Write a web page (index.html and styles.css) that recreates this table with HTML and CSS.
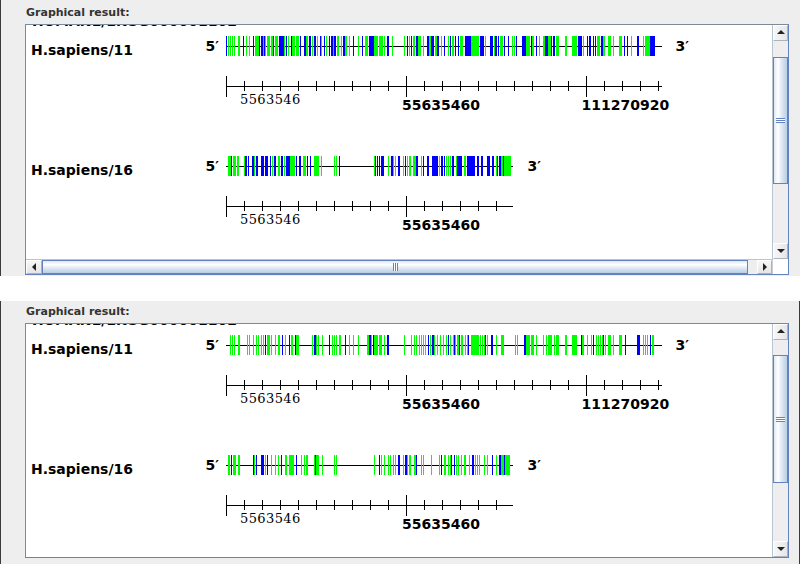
FILE: index.html
```html
<!DOCTYPE html>
<html>
<head>
<meta charset="utf-8">
<title>Graphical result</title>
<link rel="stylesheet" href="styles.css">
</head>
<body>
<section class="panel panel-top">
  <div class="caption">Graphical result:</div>
  <div class="pane pane-h">
    <div class="viewport">
      <div class="content">
        <div class="clipline">HUMAN1/ENSG000001102</div>
        <div class="row">
          <div class="species">H.sapiens/11</div>
          <svg class="track" viewBox="200 0 500 120" width="500" height="120">
            <text class="end" x="205.5" y="21">5′</text>
            <rect class="axis" x="226" y="16" width="436" height="1"/>
            <g class="bars" data-track="a1"></g>
            <text class="end" x="675.5" y="21">3′</text>
            <rect class="axis" x="226" y="56" width="436" height="1"/>
            <path class="tick" d="M244.5 51v10m18-10v10m18-10v10m18-10v10m18-10v10m18-10v10m18-10v10m18-10v10m18-10v10m18-10v10m18-10v10m18-10v10m18-10v10m18-10v10m18-10v10m18-10v10m18-10v10m18-10v10m18-10v10m18-10v10m18-10v10m18-10v10m18-10v10m18-10v10"/>
            <path class="tick" d="M226.5 46v21M406.5 46v21M586.5 46v21"/>
            <text class="num-s" x="240" y="74">5563546</text>
            <text class="num" x="402" y="80">55635460</text>
            <text class="num" x="581.5" y="80">111270920</text>
          </svg>
        </div>
        <div class="row">
          <div class="species">H.sapiens/16</div>
          <svg class="track" viewBox="200 0 500 120" width="500" height="120">
            <text class="end" x="205.5" y="21">5′</text>
            <rect class="axis" x="226" y="16" width="287" height="1"/>
            <g class="bars" data-track="a2"></g>
            <text class="end" x="527.5" y="21">3′</text>
            <rect class="axis" x="226" y="56" width="287" height="1"/>
            <path class="tick" d="M244.5 51v10m18-10v10m18-10v10m18-10v10m18-10v10m18-10v10m18-10v10m18-10v10m18-10v10m18-10v10m18-10v10m18-10v10m18-10v10m18-10v10m18-10v10"/>
            <path class="tick" d="M226.5 46v21M406.5 46v21"/>
            <text class="num-s" x="240" y="74">5563546</text>
            <text class="num" x="402" y="80">55635460</text>
          </svg>
        </div>
      </div>
    </div>
    <div class="vsb">
      <div class="btn vbtn"><span class="arr-up"></span></div>
      <div class="trk" style="height:16px"></div>
      <div class="vthumb" style="height:127px"><span class="vgrip"></span></div>
      <div class="trk fill"></div>
      <div class="btn vbtn"><span class="arr-down"></span></div>
    </div>
    <div class="hsb">
      <div class="btn hbtn hbtn-l"><span class="arr-left"></span></div>
      <div class="hthumb" style="width:706px"><span class="hgrip"></span></div>
      <div class="trk fill"></div>
      <div class="btn hbtn hbtn-r"><span class="arr-right"></span></div>
    </div>
    <div class="corner"></div>
  </div>
</section>

<section class="panel panel-bottom">
  <div class="caption">Graphical result:</div>
  <div class="pane pane-v">
    <div class="viewport">
      <div class="content">
        <div class="clipline">HUMAN1/ENSG000001102</div>
        <div class="row">
          <div class="species">H.sapiens/11</div>
          <svg class="track" viewBox="200 0 500 120" width="500" height="120">
            <text class="end" x="205.5" y="21">5′</text>
            <rect class="axis" x="226" y="16" width="436" height="1"/>
            <g class="bars" data-track="b1"></g>
            <text class="end" x="675.5" y="21">3′</text>
            <rect class="axis" x="226" y="56" width="436" height="1"/>
            <path class="tick" d="M244.5 51v10m18-10v10m18-10v10m18-10v10m18-10v10m18-10v10m18-10v10m18-10v10m18-10v10m18-10v10m18-10v10m18-10v10m18-10v10m18-10v10m18-10v10m18-10v10m18-10v10m18-10v10m18-10v10m18-10v10m18-10v10m18-10v10m18-10v10m18-10v10"/>
            <path class="tick" d="M226.5 46v21M406.5 46v21M586.5 46v21"/>
            <text class="num-s" x="240" y="74">5563546</text>
            <text class="num" x="402" y="80">55635460</text>
            <text class="num" x="581.5" y="80">111270920</text>
          </svg>
        </div>
        <div class="row">
          <div class="species">H.sapiens/16</div>
          <svg class="track" viewBox="200 0 500 120" width="500" height="120">
            <text class="end" x="205.5" y="21">5′</text>
            <rect class="axis" x="226" y="16" width="287" height="1"/>
            <g class="bars" data-track="b2"></g>
            <text class="end" x="527.5" y="21">3′</text>
            <rect class="axis" x="226" y="56" width="287" height="1"/>
            <path class="tick" d="M244.5 51v10m18-10v10m18-10v10m18-10v10m18-10v10m18-10v10m18-10v10m18-10v10m18-10v10m18-10v10m18-10v10m18-10v10m18-10v10m18-10v10m18-10v10"/>
            <path class="tick" d="M226.5 46v21M406.5 46v21"/>
            <text class="num-s" x="240" y="74">5563546</text>
            <text class="num" x="402" y="80">55635460</text>
          </svg>
        </div>
      </div>
    </div>
    <div class="vsb">
      <div class="btn vbtn"><span class="arr-up"></span></div>
      <div class="trk" style="height:15px"></div>
      <div class="vthumb" style="height:128px"><span class="vgrip"></span></div>
      <div class="trk fill"></div>
      <div class="btn vbtn"><span class="arr-down"></span></div>
    </div>
  </div>
</section>
<script src="script.js"></script>
</body>
</html>
```

FILE: styles.css
```css
* { box-sizing: border-box; }
html, body { margin: 0; padding: 0; background: #ffffff; }
body {
  width: 800px;
  height: 564px;
  overflow: hidden;
  font-family: "DejaVu Sans", sans-serif;
}

.panel {
  background: #eeeeee;
  border-left: 1px solid #3a3a3a;
  padding-left: 24px;
}
.panel-top { height: 276px; padding-top: 6px; }
.panel-bottom {
  height: 263px;
  margin-top: 25px;
  padding-top: 4px;
  border-right: 1px solid #3a3a3a;
}

.caption {
  font: bold 11px/14px "DejaVu Sans", sans-serif;
  color: #333333;
  padding-left: 1px;
  margin-bottom: 4px;
}

.pane {
  display: grid;
  grid-template-columns: 746px 16px;
  width: 764px;
  border: 1px solid;
  border-color: #7a8a99 #6382bf #6382bf #7a8a99;
}
.pane-h { grid-template-rows: 234px 15px; }
.pane-v { grid-template-rows: 233px; }

.viewport { background: #ffffff; overflow: hidden; }
.content { display: flex; flex-direction: column; }

.clipline {
  font: bold 14px/16px "DejaVu Sans", sans-serif;
  height: 17px;
  margin-top: -12px;
  padding-left: 6px;
  white-space: nowrap;
  color: #000;
  flex: none;
}

.row { display: flex; height: 120px; flex: none; }
.species {
  width: 174px;
  flex: none;
  padding: 12px 0 0 5px;
  font: bold 14px/16px "DejaVu Sans", sans-serif;
  color: #000000;
}
.track { display: block; flex: none; shape-rendering: crispEdges; }
.track .end { font: bold 14px "DejaVu Sans", sans-serif; fill: #000; }
.track .num { font: bold 14px "DejaVu Sans", sans-serif; fill: #000; }
.track .num-s { font: 13px "DejaVu Serif", serif; letter-spacing: 0.4px; fill: #000; }
.track .axis { fill: #000000; }
.track .tick { stroke: #000000; stroke-width: 1; fill: none; }
.track .g { fill: #00ff00; }
.track .b { fill: #0000ff; }

/* scrollbars (Ocean-like) */
.vsb {
  display: flex;
  flex-direction: column;
  background: #eeeeee;
  border-left: 1px solid #b8c4d2;
}
.hsb {
  display: flex;
  background: #eeeeee;
  border-top: 1px solid #b8c4d2;
}
.trk { background: #eeeeee; flex: none; }
.trk.fill { flex: 1; }
.corner { background: #ffffff; border-left: 1px solid #c8ced6; }

.btn {
  display: flex;
  align-items: center;
  justify-content: center;
  flex: none;
  border: 1px solid #a9b2be;
  border-top-color: #ffffff;
  border-left-color: #ffffff;
}
.vbtn {
  height: 16px;
  background: linear-gradient(to right, #f7f7f7, #e6e6e6);
}
.hbtn {
  width: 16px;
  background: linear-gradient(to bottom, #f7f7f7, #e6e6e6);
}
.hbtn-r { width: 15px; }

.arr-up, .arr-down, .arr-left, .arr-right { width: 0; height: 0; display: block; }
.arr-up {
  border-left: 4px solid transparent;
  border-right: 4px solid transparent;
  border-bottom: 4px solid #222;
  margin-top: -2px;
}
.arr-down {
  border-left: 4px solid transparent;
  border-right: 4px solid transparent;
  border-top: 4px solid #222;
}
.arr-left {
  border-top: 4px solid transparent;
  border-bottom: 4px solid transparent;
  border-right: 4px solid #222;
}
.arr-right {
  border-top: 4px solid transparent;
  border-bottom: 4px solid transparent;
  border-left: 4px solid #222;
}

.vthumb {
  flex: none;
  display: flex;
  align-items: center;
  justify-content: center;
  border: 1px solid #6382bf;
  background: linear-gradient(to right, #dde8f3 0%, #ffffff 30%, #dde8f3 60%, #b8cfe5 100%);
}
.vgrip {
  display: block;
  width: 9px;
  height: 5px;
  background: repeating-linear-gradient(to bottom, #6382bf 0 1px, #ffffff 1px 2px);
}
.hthumb {
  flex: none;
  display: flex;
  align-items: center;
  justify-content: center;
  border: 1px solid #6382bf;
  background: linear-gradient(to bottom, #dde8f3 0%, #ffffff 30%, #dde8f3 60%, #b8cfe5 100%);
}
.hgrip {
  display: block;
  width: 5px;
  height: 8px;
  background: repeating-linear-gradient(to right, #6382bf 0 1px, #ffffff 1px 2px);
}
```

FILE: script.js
```js
var DATA = {
  a1: "7b 13g 19g 25g 31g 43-48g 57b 67g 76-80g 88b 93-99g 100-106g 104b 112-117b 118-126g 120b 128-138g 140-147g 148b 152-160g 164-180b 180-183g 186b 192g 200-204b 205-215g 216-226g 228b 240-246b 247-252g 254-260b 265g 270-276b 279g 287b 292g 300b 306g 314b 320-326b 327g 330-337b 340-345g 352g 357-363b 364-369g 374g 388b 403g 415b 424-434g 434-450b 450-462g 464-475g 481g 489-494b 504g 541-545g 550b 556g 562b 568-574g 575-580b 582-590g 596g 609-614b 615-621g 622-632b 632-638g 638-644b 652g 660b 672g 678b 684-690g 693b 703b 709-718g 722-740b 740-765g 767b 772-782b 784g 798-808b 810g 813-819b 823b 829-838g 840b 852b 864g 870g 876b 893-906b 906-918g 922b 924-930g 936b 945g 958-963g 964-972b 972-980g 980-984b 988-994b 995-1004g 1023-1030g 1044-1060g 1062-1075b 1078-1082g 1090b 1094-1100b 1106b 1112b 1118g 1122-1128g 1130-1136b 1136-1143g 1152-1162g 1166g 1186-1196g 1200b 1210b 1220g 1240-1246b 1258g 1262-1276g 1278b 1282-1295b",
  a2: "12-22g 22-26b 27-36g 40-47g 60g 63-68b 72b 84-90b 90g 96-101b 110-120b 123-133b 138b 143g 149-155b 162-168g 170-177b 180g 186-198b 198-213g 216b 224g 226-232b 236g 240-246g 248b 258b 270-285g 292g 330g 336g 345b 450g 454b 460b 465b 472-480b 492g 500-506b 508g 513g 522-528b 536g 543b 549g 555-562g 567-575g 575-580b 592g 597b 608-614b 624-642b 646g 650-656b 660b 666g 672g 678g 684-690b 696g 700-714b 720-727g 730-755b 760-767b 770-777b 790-800b 804-810b 815g 820b 825-830b 830-860g 838b",
  b1: "18g 24g 31g 42-48g 69g 76-80g 88g 96g 103g 110g 117g 123b 128-138g 142g 153g 162-168g 175b 183g 196b 201-207g 213b 216-224g 264g 270-276b 276g 283g 294g 315b 323g 330g 337g 344-350g 362b 375g 388g 402g 429-435g 435-440b 441g 446b 450-462g 464-474g 481g 489-495b 541g 562g 570g 576g 584g 592g 597g 603g 612b 617g 625-631b 631g 638g 649g 656g 666g 672b 678g 687g 690b 694g 698-705g 705b 710g 714g 722g 729g 733b 740-765g 768g 774g 781g 784b 790g 800-806b 816g 830-840g 872g 878g 900-906b 906-918g 922-932g 936g 958g 966g 971-983g 990g 995-1004g 1023-1030g 1044-1058g 1071b 1075-1081g 1090g 1100g 1106b 1116g 1122g 1128g 1134g 1138-1142b 1144g 1152-1162g 1166g 1186-1196g 1203b 1238-1246b 1246g 1256g 1262g 1270g 1278b 1283-1290g",
  b2: "12-18g 22b 27-36g 42-47g 87b 90g 96b 111-120b 123g 129b 142g 152g 162g 172b 183-190g 196-212g 216b 232g 240g 246-252g 270-278g 273b 280-286g 293g 330g 337g 450g 465b 471g 480g 492g 499g 507g 513g 522-528b 537g 543-548b 549g 556-562g 570-576g 576b 592g 598g 621g 646g 652-656b 660-666g 672g 678g 682b 690b 696g 702g 711g 720-727g 736g 744-750b 752g 760g 766g 780g 790g 804b 815g 825-832b 832-860g 840b 850g"
};

(function () {
  var NS = "http://www.w3.org/2000/svg";
  var groups = document.querySelectorAll("g[data-track]");
  for (var i = 0; i < groups.length; i++) {
    var g = groups[i];
    var src = DATA[g.getAttribute("data-track")] || "";
    var toks = src.trim().split(/\s+/);
    var greens = [], blues = [];
    for (var j = 0; j < toks.length; j++) {
      var m = /^(\d+)(?:-(\d+))?([gb])$/.exec(toks[j]);
      if (!m) continue;
      var z1 = +m[1];
      var z2 = m[2] ? +m[2] : z1 + 3;
      var x = Math.round(224 + z1 / 3);
      var w = Math.max(1, Math.round((z2 - z1) / 3));
      (m[3] === "g" ? greens : blues).push([x, w, m[3]]);
    }
    var all = greens.concat(blues);
    for (var k = 0; k < all.length; k++) {
      var r = document.createElementNS(NS, "rect");
      r.setAttribute("x", all[k][0]);
      r.setAttribute("y", 6);
      r.setAttribute("width", all[k][1]);
      r.setAttribute("height", 20);
      r.setAttribute("class", all[k][2]);
      g.appendChild(r);
    }
  }
})();
```
